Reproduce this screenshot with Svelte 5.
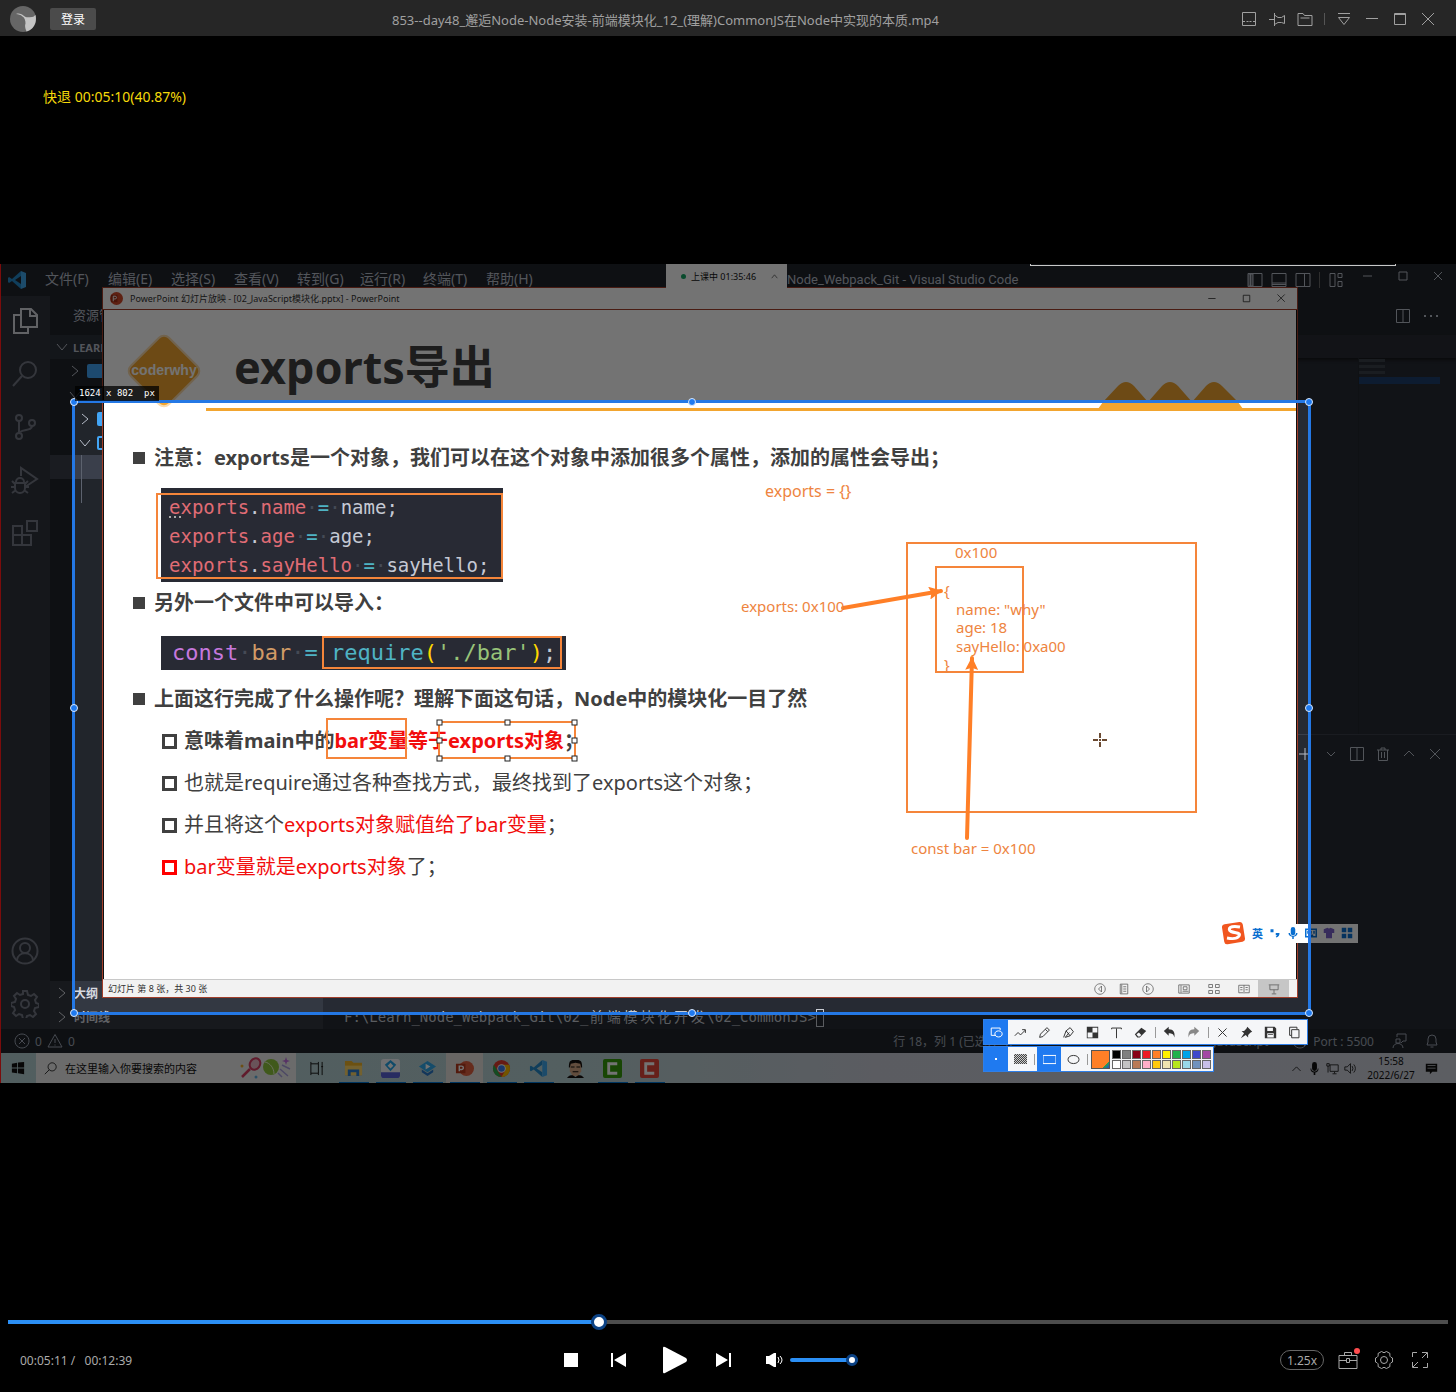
<script>
  const menus = ['文件(F)', '编辑(E)', '选择(S)', '查看(V)', '转到(G)', '运行(R)', '终端(T)', '帮助(H)'];
  const cjkCells = [...'前端模块化开发'];
  const palette = [
    '#000000', '#7f7f7f', '#880015', '#ed1c24', '#ff7f27', '#fff200', '#22b14c', '#00a2e8', '#3f48cc', '#a349a4',
    '#ffffff', '#c3c3c3', '#b97a57', '#ffaec9', '#ffc90e', '#efe4b0', '#b5e61d', '#99d9ea', '#7092be', '#c8bfe7'
  ];
  const handles = ['nw', 'n', 'ne', 'w', 'e', 'sw', 's', 'se'];
  const grips = [
    [439, 458], [507, 458], [574, 458], [439, 476], [574, 476], [439, 494], [507, 494], [574, 494]
  ];
  const notes = [
    [765, 233, 'exports = {}', 16],
    [955, 294, '0x100', 15],
    [741, 348, 'exports: 0x100', 15],
    [944, 332, '{', 15],
    [956, 351, 'name: "why"', 15],
    [956, 369, 'age: 18', 15],
    [956, 388, 'sayHello: 0xa00', 15],
    [944, 406, '}', 15],
    [911, 590, 'const bar = 0x100', 15]
  ];
  let position = $state(311);
  let volume = $state(100);
  const duration = 759;
  const seekFill = $derived((position / duration) * 100);
</script>

{#snippet line(d, label = '')}
  <svg class="ico" viewBox="0 0 16 16" role="img" aria-label={label}><path {d} /></svg>
{/snippet}

{#snippet solid(d, label = '')}
  <svg class="ico solid" viewBox="0 0 16 16" role="img" aria-label={label}><path {d} /></svg>
{/snippet}

{#snippet vscodeLogo()}
  <svg class="logo" viewBox="0 0 20 20" aria-hidden="true">
    <path fill="#2489ca" d="M14 1 5 9 2 7 1 8v4l1 1 3-2 9 8V14L8 10l6-4z" />
    <path fill="#3ea6ec" d="M14 1l5 2v14l-5 2z" />
  </svg>
{/snippet}

<div class="player">
  <header class="titlebar">
    <svg class="avatar" viewBox="0 0 26 26" aria-hidden="true">
      <circle cx="13" cy="13" r="13" fill="#666" />
      <path fill="#c4c4c4" d="M6 8c3-1 6 0 8 2 2 2 5 1 8 1 2 0 3-2 3.500-2 1 4 .5 9-3 13-2 2-4 3-6 3.500-1-3-2-5-1-8 0-3-1-6-3-7-2-2-4-2-6.500-2.500z" />
    </svg>
    <button class="login">登录</button>
    <h1>853--day48_邂逅Node-Node安装-前端模块化_12_(理解)CommonJS在Node中实现的本质.mp4</h1>
    <nav class="wintools">
      <button aria-label="迷你模式">{@render line('M1.500 1.500h13v13h-13zM2 10.500h2m1.500 0h2m1 0h2m1.500 0h2')}</button>
      <button aria-label="置顶">{@render line('M0 8.500h5M5.500 2v13M5.500 4l3.500 2.500h3.500l3-2v8l-3-1H9l-3.500 2')}</button>
      <button aria-label="打开文件">{@render line('M1 14.500v-12h5l1.500 2h7.500v10zM3.500 7h9')}</button>
      <i></i>
      <button aria-label="菜单">{@render line('M2 2.500h12M2.500 6.500h11l-5.500 7z')}</button>
      <button aria-label="最小化">{@render line('M2 7.500h12')}</button>
      <button aria-label="最大化">{@render line('M2.500 2.500h11v11h-11zM2.500 3.500h11')}</button>
      <button aria-label="关闭">{@render line('M2 2l12 12M14 2 2 14')}</button>
    </nav>
  </header>

  <main class="stage">
    <p class="osd">快退 00:05:10(40.87%)</p>

    <div class="desktop">
      <section class="vscode">
        <div class="menubar">
          {@render vscodeLogo()}
          <div class="menus">
            {#each menus as m}<span>{m}</span>{/each}
          </div>
          <span class="wname">Node_Webpack_Git - Visual Studio Code</span>
          <div class="layouts">
            {@render line('M1 1.500h14v13H1zM2 2h4v12H2zM3.500 2v12M5 2v12')}
            {@render line('M1 1.500h14v13H1zM1 11h14M1 12.500h14')}
            {@render line('M1 1.500h14v13H1zM9.500 2v12')}
            <i></i>
            {@render line('M2 1.500h5v13H2zM10 1.500h4v4h-4zM10 9.500h4v5h-4z')}
          </div>
          <div class="sysbtns">
            {@render line('M3 8h9')}
            {@render line('M4 4h8v8H4z')}
            {@render line('M4 4l8 8M12 4l-8 8')}
          </div>
        </div>

        <div class="work">
          <aside class="activity">
            <svg class="on" viewBox="0 0 28 28"><path d="M10 2h10l6 6v12H10zM19 2v7h7M10 8H3v18h14v-6" /></svg>
            <svg viewBox="0 0 28 28"><circle cx="17" cy="10" r="8" /><path d="M11 16 2 26" /></svg>
            <svg viewBox="0 0 28 28"><circle cx="8" cy="5" r="3" /><circle cx="8" cy="23" r="3" /><circle cx="21" cy="10" r="3" /><path d="M8 8v12M21 13c0 5-8 3-12 6" /></svg>
            <svg viewBox="0 0 28 28"><path d="M10 10V2l16 11-12 8M5 16a4 4 0 0 1 8 0M4 17h10v5a5 5 0 0 1-10 0zM1 15l3 3M17 15l-3 3M0 21h4M14 21h4M1 27l4-3M17 27l-4-3" /></svg>
            <svg viewBox="0 0 28 28"><path d="M2 7h9v9h9v10H2zM2 16h9v10M16 2h10v10H16z" /></svg>
            <span class="push"></span>
            <svg viewBox="0 0 28 28"><circle cx="14" cy="14" r="12.500" /><circle cx="14" cy="11" r="5" /><path d="M6 23c1-9 15-9 16 0" /></svg>
            <svg viewBox="0 0 28 28"><path d="M12 1h4l1 4 3 1 3-2 3 3-2 3 1 3 3 1v3l-4 1-1 3 2 3-3 3-3-2-3 1-1 3h-3l-1-4-3-1-3 2-3-3 2-3-1-3-3-1v-3l4-1 1-3-2-3 3-3 3 2 3-1z" /><circle cx="14" cy="14" r="4" /></svg>
          </aside>
          <aside class="sidebar">
            <div class="shead">资源管理器</div>
            <div class="row root">{@render line('M3 5l5 6 5-6')}<b>LEARN</b></div>
            <div class="row d1">{@render line('M5 3l6 5-6 5')}<span class="folder"></span></div>
            <div class="row d1">{@render line('M3 5l5 6 5-6')}<span class="folder"></span></div>
            <div class="row d2">{@render line('M5 3l6 5-6 5')}<span class="folder"></span></div>
            <div class="row d2">{@render line('M3 5l5 6 5-6')}<span class="folder open"></span></div>
            <div class="row sel"><span class="guide"></span></div>
            <div class="row"><span class="guide"></span></div>
            <span class="push"></span>
            <div class="row foot">{@render line('M5 3l6 5-6 5')}<b>大纲</b></div>
            <div class="row foot">{@render line('M5 3l6 5-6 5')}<b>时间线</b></div>
          </aside>
          <div class="editor">
            <div class="tabs">
              {@render line('M1.500 1.500h13v13h-13zM8 2v12')}
              {@render solid('M1 7h2v2H1zM7 7h2v2H7zM13 7h2v2h-2z')}
            </div>
            <div class="crumbs"></div>
            <div class="code"><div class="minimap"><i></i><i></i><i></i><b></b></div></div>
            <div class="panel">
              <div class="ptools">
                {@render line('M8 2v12M2 8h12')}
                {@render line('M4 6l4 4 4-4')}
                {@render line('M1.500 1.500h13v13h-13zM8 2v12')}
                {@render line('M2 4h12M6 4V2h4v2M3.500 4v10.500h9V4M6.500 6v6M9.500 6v6')}
                {@render line('M3 10l5-5 5 5')}
                {@render line('M3 3l10 10M13 3 3 13')}
              </div>
              <p class="prompt">F:\Learn_Node_Webpack_Git\02_{#each cjkCells as c}<span class="cell">{c}</span>{/each}\02_CommonJS&gt;<span class="caret"></span></p>
            </div>
          </div>
        </div>

        <div class="statusbar">
          {@render line('M8 1a7 7 0 1 0 .01 0zM5 5l6 6M11 5l-6 6')}<span>0</span>
          {@render line('M8 1.500 1 14h14zM8 6v4M8 11.500v1')}<span>0</span>
          <span class="pos">行 18，列 1 (已选择 4)</span>
          <span class="lang">JavaScript</span>
          {@render line('M8 1a7 7 0 1 0 .01 0zM3 3l10 10')}
          <span>Port : 5500</span>
          <span class="fb">{@render line('M5 6h4v4H5zM2 15c0-6 10-6 10 0M6 4V1h9v7h-3l-2 2')}</span>
          <span class="bell">{@render line('M3 12h10l-1-3V6a4 4 0 0 0-8 0v3zM6.500 14h3')}</span>
        </div>
      </section>

      <div class="taskbar">
        <span class="start">{@render solid('M1 3l6-1v5.500H1zM8 1.800 15 1v6.500H8zM1 8.500h6V14l-6-1zM8 8.500h7V15l-7-1z')}</span>
        <div class="search">
          {@render line('M10 1a5 5 0 1 0 .01 0zM6.500 9.500 1 15')}
          <span>在这里输入你要搜索的内容</span>
          <svg class="sport" viewBox="0 0 52 22" aria-hidden="true">
            <ellipse cx="15" cy="7" rx="5" ry="6" transform="rotate(35 15 7)" fill="#e9b9c6" stroke="#d43c62" stroke-width="2" />
            <path d="M10 12 2 20" stroke="#d43c62" stroke-width="2.500" />
            <circle cx="31" cy="10" r="8" fill="#8fc63d" /><path d="M25 5c5 1 9 6 9 12" stroke="#eaf6d0" fill="none" />
            <path d="M40 12l8 7M42 8l8 4M38 16l4 4" stroke="#a9a0dd" stroke-width="1.500" />
            <path d="M46 0l1 3 3 1-3 1-1 3-1-3-3-1 3-1z" fill="#c070e0" /><circle cx="2" cy="9" r="1.500" fill="#f0b030" /><circle cx="16" cy="20" r="1.500" fill="#60b0e0" />
          </svg>
        </div>
        <span class="app plain">{@render line('M2 3v-2M10 3v-2M2 15v-2M10 15v-2M2 3h8v10H2zM14 1v14M13 6h2')}</span>
        <span class="app"><svg viewBox="0 0 20 20"><path fill="#f0b429" d="M1 2h7l2 2h9v13H1z" /><path fill="#ffd768" d="M1 7h18v10H1z" /><path fill="#2f7fd0" d="M4 18v-7h12v7h-3v-4H7v4z" /></svg></span>
        <span class="app"><svg viewBox="0 0 20 20"><rect width="20" height="20" rx="3" fill="#f3f6fb" /><path fill="#25a5e8" d="M4 6l6-5 6 5-6 7z" /><path fill="#fff" d="M10 4l3 3-3 3-3-3z" /><path fill="#5a62d8" d="M0 14h20v3a3 3 0 0 1-3 3H3a3 3 0 0 1-3-3z" /></svg></span>
        <span class="app"><svg viewBox="0 0 20 20"><path fill="#2fa8ea" d="M1 8l9-6 9 6-9 6z" /><path fill="#2b78c8" d="M4 11l6 4 6-4v3l-6 4-6-4z" /><path fill="#fff" d="M8 5l5 3-5 3z" /></svg></span>
        <span class="app lit"><svg viewBox="0 0 20 20"><circle cx="12" cy="10" r="8" fill="#e2603f" /><path fill="#b83b1d" d="M1 5h10v10H1z" /><path d="M4.500 13V7.500H7a1.500 1.500 0 0 1 0 3.500H5" fill="none" stroke="#fff" stroke-width="1.500" /></svg></span>
        <span class="app"><svg viewBox="0 0 20 20"><circle cx="10" cy="10" r="9" fill="#e33b2e" /><path fill="#2da94f" d="M2 6l6 10 2 3a9 9 0 0 1-8-13z" /><path fill="#fdbd00" d="M10 6h8a9 9 0 0 1-8 13l4-7z" /><circle cx="10" cy="10" r="4.500" fill="#fff" /><circle cx="10" cy="10" r="3.500" fill="#3b7ded" /></svg></span>
        <span class="app">{@render vscodeLogo()}</span>
        <span class="app plain"><svg viewBox="0 0 20 20"><path fill="#d9ab88" d="M4 4h12v9l-3 5H7l-3-5z" /><path fill="#15100e" d="M3 9c0-8 2-8 7-8s7 0 7 8h-1l-1-4-5-1-5 1-1 4zM5 8h4v1H5zM11 8h4v1h-4zM7 13h6v1H7zM1 20c2-3 4-3 6-3l3 2 3-2c2 0 4 0 6 3z" /></svg></span>
        <span class="app"><svg viewBox="0 0 20 20"><rect width="20" height="20" rx="2" fill="#379c0c" /><path d="M15 5H6v10h9" fill="none" stroke="#fff" stroke-width="3" /></svg></span>
        <span class="app"><svg viewBox="0 0 20 20"><rect width="20" height="20" rx="2" fill="#e2483b" /><path d="M15 5H6v10h9" fill="none" stroke="#fff" stroke-width="3" /></svg></span>
        <div class="tray">
          {@render line('M3 11l5-5 5 5')}
          {@render solid('M5 3a3 3 0 0 1 6 0v5a3 3 0 0 1-6 0zM3 8h1c0 5 8 5 8 0h1c0 3-2 5-4 5v3H7v-3c-2 0-4-2-4-5z')}
          {@render line('M5 3.500h10v8H5zM8 14.500h5M10.500 12v2M1 2h3v3H1zM2.500 5v8')}
          {@render line('M1 6h3l4-4v12l-4-4H1zM10 5q2 3 0 6M12 3q4 5 0 10')}
          <time>15:58<br />2022/6/27</time>
          {@render solid('M1 2h14v10h-6l-3 3v-3H1zM3 4v1h10V4zM3 7v1h10V7z')}
        </div>
      </div>

      <section class="ppt">
        <div class="ptitle">
          <svg viewBox="0 0 14 14" aria-hidden="true"><circle cx="7" cy="7" r="7" fill="#d0492a" /><path fill="#a52f15" d="M1 3h7v8H1z" /><path d="M3.500 10V4.500h2a1.500 1.500 0 0 1 0 3h-2" fill="none" stroke="#fff" /></svg>
          <span>PowerPoint 幻灯片放映 - [02_JavaScript模块化.pptx] - PowerPoint</span>
          <div class="pbtns">
            {@render line('M4 8h9')}
            {@render line('M4 4h8v8H4z')}
            {@render line('M3 3l9 9M12 3l-9 9')}
          </div>
        </div>
        <article class="slide">
          <header>
            <div class="brand">
              <svg viewBox="0 0 80 80" aria-hidden="true"><rect x="13" y="14" width="54" height="54" rx="7" transform="rotate(45 40 41)" fill="#f2a52f" stroke="#fbdcae" stroke-width="2" /></svg>
              <span>coderwhy</span>
            </div>
            <h2>exports导出</h2>
            <svg class="hills" viewBox="0 0 146 30" aria-hidden="true"><path fill="#f2a52f" d="M0 29 5 22 20 6q8-8 16 0l14 16 14-16q8-8 16 0l14 16 14-16q8-8 16 0l16 16 5 7z" /></svg>
          </header>
          <div class="content">
            <p class="h">注意：exports是一个对象，我们可以在这个对象中添加很多个属性，添加的属性会导出；</p>
            <pre class="snip one"><u class="hint">exports</u>.<u>name</u><s>·</s><em>=</em><s>·</s>name;
<u>exports</u>.<u>age</u><s>·</s><em>=</em><s>·</s>age;
<u>exports</u>.<u>sayHello</u><s>·</s><em>=</em><s>·</s>sayHello;</pre>
            <p class="h">另外一个文件中可以导入：</p>
            <pre class="snip two"><span class="kw">const</span><s>·</s><span class="id">bar</span><s>·</s><em>=</em> <em>require</em><span class="br">(</span><span class="st">'./bar'</span><span class="br">)</span>;</pre>
            <p class="h">上面这行完成了什么操作呢？理解下面这句话，Node中的模块化一目了然</p>
            <ul>
              <li class="bold">意味着main中的<mark>bar变量等于exports对象</mark>；</li>
              <li>也就是require通过各种查找方式，最终找到了exports这个对象；</li>
              <li>并且将这个<mark>exports对象赋值给了bar变量</mark>；</li>
              <li class="red"><mark>bar变量就是exports对象</mark>了；</li>
            </ul>
          </div>
        </article>
        <footer>
          <span>幻灯片 第 8 张，共 30 张</span>
          <div class="views">
            {@render line('M8 1a7 7 0 1 0 .01 0zM10 4v8L6 8z')}
            {@render line('M3 1.500h10v13H3zM5 2v12M7 5h4M7 8h4M7 11h4')}
            {@render line('M8 1a7 7 0 1 0 .01 0zM6 4v8l4-4z')}
            {@render line('M1 2.500h14v11H1zM4 3v10M7 5h5v4H7zM6 11h8')}
            {@render line('M1 2h5v4H1zM10 2h5v4h-5zM1 10h5v4H1zM10 10h5v4h-5z')}
            {@render line('M8 3v11M8 3H1v10h6M8 3h7v10H9M3 6h3M3 9h3M10 6h3M10 9h3')}
            <span class="active">{@render line('M1 2.500h14M2.500 3v6h11V3M8 9v5M5 14.500h6')}</span>
          </div>
        </footer>
      </section>

      <svg class="drawings" aria-label="标注">
        <defs>
          <marker id="tip" viewBox="0 0 12 12" refX="11" refY="6" markerWidth="15" markerHeight="13" markerUnits="userSpaceOnUse" orient="auto">
            <path d="M0 0l12 6-12 6 2-6z" fill="#ff7f27" />
          </marker>
        </defs>
        <g class="box">
          <rect x="157" y="230" width="345" height="84" />
          <rect x="323" y="373" width="238" height="31" />
          <rect x="327" y="455" width="79" height="39" />
          <rect x="439" y="458" width="136" height="36" />
          <rect x="907" y="279" width="289" height="269" />
          <rect x="936" y="303" width="87" height="105" />
        </g>
        <path class="arrow" d="M843 344l98-17" marker-end="url(#tip)" />
        <path class="arrow" d="M967 574l5-180" marker-end="url(#tip)" />
        {#each grips as [x, y]}<rect class="grip" x={x - 2} y={y - 2} width="5" height="5" />{/each}
        {#each notes as [x, y, text, size]}<text {x} {y} font-size={size}>{text}</text>{/each}
        <path class="cross" d="M1093 476h5M1102 476h5M1100 469v5M1100 478v5M1099 476h2" />
      </svg>

      <div class="ime">
        <svg class="sogou" viewBox="0 0 24 24" aria-hidden="true"><rect x="1" y="2" width="21" height="20" rx="3" transform="rotate(-9 12 12)" fill="#f1561f" /><path d="M18 6C8 4 5 8 9 10.500c5 2 10 1 8 4.500-2 3-7 3-12 2" fill="none" stroke="#fff" stroke-width="3" /></svg>
        <b>英</b>
        {@render solid('M2 3h4v4H2zM9 8h5c0 3-1 5-4 6l-1-1 2-2H9z')}
        {@render solid('M5 3a3 3 0 0 1 6 0v5a3 3 0 0 1-6 0zM2 8h2c0 5 8 5 8 0h2c0 3-2 4.500-5 5v3H7v-3c-3-.5-5-2-5-5z')}
        <span class="keys">{@render line('M1 3h14v10H1zM3 6h2M7 6h2M11 6h2M3 8h2M7 8h2M11 8h2M5 11h6')}</span>
        <span class="shirt">{@render solid('M1 3l5-2q2 2 4 0l5 2v5h-3v7H4V8H1z')}</span>
        {@render solid('M1 1h6v6H1zM9 1h6v6H9zM1 9h6v6H1zM9 9h6v6H9z')}
      </div>

      <div class="class-chip"><i></i><span>上课中 01:35:46</span>{@render line('M3 11l5-6 5 6')}</div>

      <div class="selection">
        {#each handles as h}<i class={h}></i>{/each}
        <span class="dims">1624 x 802&nbsp; px</span>
      </div>
      <span class="edge"></span>
      <span class="topline"></span>

      <div class="shot">
        <div class="bar main">
          <button class="on" aria-label="形状">{@render line('M7 11.500H1.500v-9h11V5M10.500 6c6 0 6 7.500 0 7.500s-6-7.500 0-7.500z')}</button>
          <button aria-label="折线">{@render line('M1 12l4-4 3 3 6-6M10 4.500h4v4')}</button>
          <button aria-label="铅笔">{@render line('M2 14l1-4 8-8 3 3-8 8zM9 4l3 3')}</button>
          <button aria-label="荧光笔">{@render line('M2 14l3-8 5-4 4 5-4 5-6 2 5-6M5 6l5 6')}</button>
          <button aria-label="马赛克">{@render solid('M1 1h14v14H1zM8 2v6h6V2zM2 8v6h6V8z')}</button>
          <button aria-label="文字">{@render line('M2 4V2.500h12V4M8 3v12')}</button>
          <button aria-label="橡皮">{@render solid('M1 10l8-8 6 4-8 8H4zM3 10l2 3h2l2-2-3-3z')}</button>
          <i></i>
          <button aria-label="撤销">{@render solid('M1 6l6-5v3c6 0 8 4 7 10-1-4-3-5-7-5v3z')}</button>
          <button class="dimmed" aria-label="重做">{@render solid('M15 6 9 1v3C3 4 1 8 2 14c1-4 3-5 7-5v3z')}</button>
          <i></i>
          <button aria-label="取消">{@render line('M3 3l10 10M13 3 3 13')}</button>
          <button aria-label="钉住">{@render solid('M9 1l6 6-2 1-3 3v3l-3-3-6 4 4-6-3-3h3l3-3z')}</button>
          <button aria-label="保存">{@render solid('M1 1h12l2 2v12H1zM4 2v4h7V2zM4 9v5h8V9zM5 10h6v1H5z')}</button>
          <button aria-label="复制">{@render line('M4.500 4.500h9v10h-9zM11 4V1.500H2v10h2')}</button>
        </div>
        <div class="bar sub">
          <button class="on" aria-label="线宽"><span class="dot"></span></button>
          <button aria-label="填充"><span class="mesh"></span></button>
          <i></i>
          <button class="on" aria-label="矩形">{@render line('M0 3h16v10H0z')}</button>
          <button aria-label="椭圆">{@render line('M8 3c9 0 9 10 0 10S-1 3 8 3z')}</button>
          <i></i>
          <button class="current" aria-label="当前颜色"></button>
          <div class="palette">
            {#each palette as c}<button style:background={c} aria-label={c}></button>{/each}
          </div>
        </div>
      </div>
    </div>
  </main>

  <footer class="controls">
    <input class="seek" type="range" min="0" max={duration} bind:value={position} style:--fill="{seekFill}%" aria-label="播放进度" />
    <div class="buttons">
      <div class="time">00:05:11 /&nbsp;&nbsp; 00:12:39</div>
      <div class="transport">
        <button aria-label="停止">{@render solid('M1 1h14v14H1z')}</button>
        <button aria-label="上一个">{@render solid('M0 1h2v14H0zM15 1v14L3 8z')}</button>
        <button class="play" aria-label="播放">
          <svg viewBox="0 0 26 28"><path fill="#fff" d="M1 2q0-2 2-1l21 11q2 2 0 4L3 27q-2 1-2-1z" /></svg>
        </button>
        <button aria-label="下一个">{@render solid('M14 1h2v14h-2zM1 1v14l12-7z')}</button>
        <div class="vol">
          <button aria-label="音量">
            <svg viewBox="0 0 18 16"><path fill="#fff" d="M0 4h3l5-3h2v14H8l-5-3H0z" /><path d="M12 5q2 3 0 6M14 4q4 4 0 8" fill="none" stroke="#fff" /></svg>
          </button>
          <input class="volume" type="range" min="0" max="100" bind:value={volume} aria-label="音量大小" />
        </div>
      </div>
      <div class="extras">
        <button class="speed">1.25x</button>
        <button class="kit" aria-label="工具箱">
          <svg viewBox="0 0 20 20"><path d="M1 5.500h18v13H1zM6.500 5V2.500h7V5M1 10.500h7M12 10.500h7M8.500 8.500h3v4h-3z" /></svg>
          <span class="badge"></span>
        </button>
        <button aria-label="设置">
          <svg viewBox="0 0 20 20"><path d="M7.500 1.500Q10 4 12.500 1.500L16 3.500Q15 7 18.500 8v4Q15 13 16 16.500l-3.500 2Q10 16 7.500 18.500L4 16.500Q5 13 1.500 12V8Q5 7 4 3.500z" /><circle cx="10" cy="10" r="3.500" /></svg>
        </button>
        <button aria-label="全屏">
          <svg viewBox="0 0 20 20"><path d="M2.500 7V2.500H7M12 2.500h5.500V8M17 3l-5 5M17.500 13v4.500H13M8 17.500H2.500V12M3 17l5-5" /></svg>
        </button>
      </div>
    </div>
  </footer>
</div>

<style>
  :global(body) { background: #000; }
  .player, .player * { box-sizing: border-box; }
  .player {
    min-height: 100vh; display: flex; flex-direction: column; background: #000; color: #a9a9a9;
    font-family: "Noto Sans", "Noto Sans CJK SC", sans-serif; font-size: 12px; overflow: hidden;
  }
  h1, h2, p, ul, pre { margin: 0; padding: 0; }
  button { border: 0; padding: 0; background: none; color: inherit; font: inherit; display: flex; align-items: center; justify-content: center; }
  .ico { width: 16px; height: 16px; flex: none; fill: none; stroke: currentColor; stroke-width: 1; display: block; }
  .solid { fill: currentColor; stroke: none; fill-rule: evenodd; }
  .logo { width: 20px; height: 20px; flex: none; display: block; }
  .push { flex: 1; }

  .titlebar { height: 36px; flex: none; display: flex; align-items: center; background: #262626; padding: 4px 20px 0 10px; }
  .titlebar > * { margin-bottom: 2px; }
  .avatar { width: 26px; height: 26px; }
  .login { width: 46px; height: 22px; margin-left: 14px; background: #4b4b4b; color: #fff; border-radius: 2px; font-size: 12px; }
  h1 { flex: 1; padding: 2px 6px 0 0; text-align: center; font-size: 13px; line-height: 20px; font-weight: 400; color: #a0a0a0; white-space: nowrap; }
  .wintools { display: flex; align-items: center; gap: 12px; color: #a0a0a0; }
  .wintools i { width: 1px; height: 12px; background: #555; margin: 0 -1px; }

  .stage { flex: 1; position: relative; display: flex; align-items: center; }
  .osd { position: absolute; left: 43px; top: 50px; font-size: 14px; line-height: 22px; color: #f5d90a; }
  .desktop { position: relative; width: 100%; aspect-ratio: 16 / 9; overflow: hidden; display: flex; flex-direction: column; background: #262a33; }

  .vscode { flex: 1; min-height: 0; display: flex; flex-direction: column; color: #b6bcc8; }
  .menubar { height: 32px; flex: none; background: #21252b; display: flex; align-items: center; padding: 0 10px 0 7px; white-space: nowrap; }
  .menus { display: flex; margin-left: 18px; gap: 9px; width: 742px; font-size: 14px; line-height: 20px; padding-bottom: 2px; }
  .menus span { min-width: 54px; }
  .wname { font: 14px/20px Roboto, sans-serif; font-size: 13px; flex: 1; }
  .layouts { display: flex; gap: 8px; align-items: center; margin-right: 16px; }
  .layouts i { width: 1px; height: 16px; background: #666; }
  .sysbtns { display: flex; gap: 19px; padding-bottom: 8px; }
  .work { flex: 1; min-height: 0; display: flex; }
  .activity { width: 50px; background: #2f333d; padding: 11px 0; display: flex; flex-direction: column; align-items: center; gap: 25px; }
  .activity svg { width: 28px; height: 28px; flex: none; fill: none; stroke: #747985; stroke-width: 2; }
  .activity .on { stroke: #d7dae0; }
  .sidebar { width: 273px; background: #21252b; display: flex; flex-direction: column; font-size: 12px; }
  .shead { height: 39px; line-height: 39px; padding-left: 23px; font-size: 13px; }
  .row { height: 24px; display: flex; align-items: center; padding-left: 4px; gap: 4px; }
  .root { background: #2c313a; }
  .root b { font-size: 11px; margin-left: -1px; }
  .d1 { padding-left: 17px; }
  .d2 { padding-left: 27px; }
  .folder { width: 20px; height: 14px; border-radius: 2px; background: #42a5f5; }
  .open { background: none; border: 2px solid #42a5f5; }
  .sel { background: #3a3f4b; }
  .guide { width: 1px; height: 24px; margin-left: 27px; background: #5c626e; }
  .foot { background: #333842; color: #d7dae0; height: 24px; }
  .editor { flex: 1; display: flex; flex-direction: column; background: #262a33; }
  .tabs { height: 39px; background: #21252b; display: flex; justify-content: flex-end; align-items: center; gap: 12px; padding-right: 17px; }
  .crumbs { height: 23px; background: #282c34; box-shadow: 0 2px 3px #15171a; }
  .code { flex: 1; display: flex; justify-content: flex-end; border-bottom: 1px solid #3a3f4b; }
  .minimap { width: 98px; border-left: 1px solid #23272e; padding: 1px 16px 0 0; display: flex; flex-direction: column; gap: 3px; }
  .minimap i { width: 26px; height: 3px; background: #3b404a; }
  .minimap b { height: 7px; background: #1e3f6e; }
  .panel { height: 294px; display: flex; flex-direction: column; justify-content: space-between; }
  .ptools { height: 38px; display: flex; align-items: center; justify-content: flex-end; gap: 10px; padding-right: 13px; }
  .prompt { font: 14px/24px "DejaVu Sans Mono", "Noto Sans CJK SC", monospace; padding-left: 21px; color: #c8ccd4; white-space: nowrap; }
  .cell { display: inline-block; width: 2ch; text-align: center; }
  .caret { display: inline-block; width: 8px; height: 18px; border: 1px solid #c8ccd4; vertical-align: middle; }
  .statusbar { height: 24px; flex: none; background: #21252b; display: flex; align-items: center; gap: 5px; padding: 0 16px 0 14px; font-size: 12px; color: #9da5b4; }
  .pos { margin-left: auto; flex: none; width: 315px; }
  .lang { width: 74px; }
  .fb { margin-left: 12px; }
  .bell { margin-left: 12px; }

  .taskbar { height: 30px; flex: none; display: flex; align-items: center; background: linear-gradient(90deg, #b4d0d3, #b9d2d4 40%, #c9cdd8 60%, #cdd0da); color: #111; }
  .start { width: 36px; display: flex; justify-content: center; }
  .start .ico { width: 14px; height: 14px; }
  .search { width: 260px; height: 30px; margin-right: 2px; background: #eee; display: flex; align-items: center; gap: 8px; padding: 0 4px 0 8px; font-size: 11px; }
  .search .ico { width: 13px; height: 13px; }
  .search span { flex: 1; }
  .sport { width: 52px; height: 22px; }
  .app { width: 37px; height: 30px; display: flex; align-items: center; justify-content: center; background: linear-gradient(#0078d7, #0078d7) center bottom / 30px 1px no-repeat; }
  .app svg { width: 19px; height: 19px; }
  .app.plain { background: none; }
  .app .ico { width: 15px; height: 15px; }
  .app.lit { background-color: #e6e2de; }
  .tray { margin-left: auto; display: flex; align-items: center; gap: 5px; padding-right: 18px; }
  .tray .ico { width: 13px; height: 13px; }
  .tray time { width: 58px; text-align: center; font-size: 10px; line-height: 14px; }

  .ppt { position: absolute; left: 102px; top: 23px; width: 1196px; height: 711px; border: 1px solid #a23f2b; background: #fff; display: flex; flex-direction: column; color: #333; }
  .ptitle { height: 22px; flex: none; border-bottom: 1px solid #a23f2b; display: flex; align-items: center; padding: 0 9px 0 7px; gap: 7px; font-size: 9px; }
  .ptitle > svg { width: 13px; height: 13px; }
  .ptitle span { flex: 1; white-space: nowrap; }
  .pbtns { display: flex; gap: 22px; }
  .pbtns .ico { width: 13px; height: 13px; }
  .slide { flex: 1; min-height: 0; border: solid #111; border-width: 0 1px; }
  .slide header { height: 101px; display: flex; align-items: flex-start; position: relative; padding: 20px 0 0 20px; background: linear-gradient(#f2a52f, #f2a52f) 102px bottom / 100% 3px no-repeat; }
  .brand { width: 80px; height: 80px; display: grid; place-items: center; color: #fff; }
  .brand > * { grid-area: 1 / 1; }
  .brand svg { width: 80px; height: 80px; }
  .brand span { font: bold 14px "Liberation Sans", sans-serif; }
  h2 { margin-left: 30px; font-size: 45px; line-height: 74px; font-weight: 700; color: #404040; }
  .hills { width: 146px; height: 30px; margin: 50px 52px 0 auto; }
  .content { padding: 26px 29px; font-size: 20px; line-height: 42px; color: #404040; white-space: nowrap; }
  .content .h { font-weight: 700; display: flex; align-items: center; gap: 9px; }
  .h::before { content: ""; width: 12px; height: 12px; background: #404040; }
  .snip { width: max-content; margin-left: 28px; background: #282a34; color: #c5c9d4; font-family: "DejaVu Sans Mono", monospace; }
  .one { margin-top: 9px; padding: 5px 14px 2px 8px; font-size: 19px; line-height: 29px; }
  .two { margin-top: 12px; margin-bottom: 8px; padding: 0 10px 0 11px; font-size: 22px; line-height: 34px; }
  .snip u { text-decoration: none; color: #e06c75; }
  .snip .hint { background: radial-gradient(circle, #c5c9d4 1px, transparent 1px) 0 100% / 4px 3px repeat-x; background-size: 4px 3px; }
  .snip .hint { background: linear-gradient(90deg, #aaa 2px, transparent 2px 5px, #aaa 5px 7px, transparent 7px 10px, #aaa 10px 12px, transparent 12px) left bottom / 100% 2px no-repeat; }
  .snip s { text-decoration: none; color: #454a56; }
  .snip em { font-style: normal; color: #4fb3c4; }
  .kw { color: #c678dd; }
  .id { color: #d19a66; }
  .br { color: #ffd700; }
  .st { color: #98c379; }
  ul { list-style: none; }
  li { display: flex; align-items: center; padding-left: 29px; }
  li::before { content: ""; width: 9px; height: 9px; border: 3px solid #404040; margin-right: 7px; }
  li.red::before { border-color: #f00; }
  .bold { font-weight: 700; }
  mark { background: none; color: #f20d0d; }
  .ppt footer { height: 18px; flex: none; background: #f2f2f2; border-top: 1px solid #c8c8c8; display: flex; align-items: center; justify-content: space-between; padding: 0 8px 0 5px; font-size: 9px; }
  .views { display: flex; align-items: center; gap: 12px; color: #555; }
  .views .ico { width: 12px; height: 12px; }
  .views .ico:nth-child(n + 4) { margin-left: 6px; }
  .views .ico:nth-child(4) { margin-left: 12px; }
  .views .active { background: #c6c6c6; width: 31px; height: 17px; margin-left: -4px; display: grid; place-items: center; }
  .views .active .ico { margin: 0; }

  .drawings { position: absolute; inset: 0; width: 100%; height: 100%; }
  .box rect { fill: none; stroke: #f5853a; stroke-width: 2; }
  .arrow { stroke: #ff7f27; stroke-width: 4; stroke-linecap: round; }
  .grip { fill: #fff; stroke: #222; }
  .drawings text { fill: #ee8440; font-family: "Noto Sans", sans-serif; }
  .cross { stroke: #6b4a32; stroke-width: 2; }

  .ime { position: absolute; left: 1222px; top: 657px; width: 136px; height: 24px; display: flex; align-items: center; gap: 6px; padding-right: 4px; color: #0a6fd0; background: linear-gradient(#fff, #fff) 14px 3px / 122px 19px no-repeat; }
  .ime .ico { width: 12px; height: 12px; }
  .ime b { font-size: 11px; }
  .sogou { width: 24px; height: 24px; flex: none; }
  .shirt { color: #7a63c9; }
  .keys .ico { stroke-width: 2; }
  .class-chip { position: absolute; left: 666px; top: 0; width: 121px; height: 25px; background: #fff; color: #111; display: flex; align-items: center; gap: 5px; padding: 0 8px 0 15px; font-size: 9px; white-space: nowrap; }
  .class-chip i { width: 5px; height: 5px; border-radius: 50%; background: #16a765; }
  .class-chip span { flex: 1; }
  .class-chip .ico { width: 9px; height: 9px; }

  .selection { position: absolute; left: 72px; top: 136px; width: 1239px; height: 615px; border: 3px solid #2478e5; box-shadow: 0 0 0 2000px rgba(0, 0, 0, .55); }
  .selection i { position: absolute; width: 8px; height: 8px; border-radius: 50%; background: #1f7af0; border: 1px solid #dbe9fb; transform: translate(-50%, -50%); left: 50%; top: 50%; }
  .selection .nw, .selection .w, .selection .sw { left: -1px; }
  .selection .ne, .selection .e, .selection .se { left: calc(100% + 1px); }
  .selection .nw, .selection .n, .selection .ne { top: -1px; }
  .selection .sw, .selection .s, .selection .se { top: calc(100% + 1px); }
  .dims { position: absolute; left: 0; bottom: calc(100% + 2px); height: 15px; padding: 0 4px; background: rgba(0, 0, 0, .75); color: #fff; font: 9px/15px "DejaVu Sans Mono", monospace; white-space: nowrap; }
  .edge { position: absolute; left: 0; top: 0; bottom: 0; width: 1px; background: #7a0c0c; }
  .topline { position: absolute; left: 1030px; top: 0; width: 366px; height: 2px; border: 1px solid #c8c8c8; border-top: 0; }

  .shot { position: absolute; left: 983px; top: 755px; color: #333; }
  .bar { display: flex; align-items: center; background: #f5f6f8; border: 1px solid #2f7fe8; }
  .bar button { height: 24px; flex: 1; }
  .bar .ico { width: 13px; height: 13px; stroke-width: 1.2; }
  .bar .solid { stroke-width: 0; }
  .bar i { width: 1px; height: 11px; background: #999; margin: 0 2px; }
  .bar .on { background: #1f7af0; color: #fff; }
  .bar .dimmed { color: #888; }
  .main { width: 325px; }
  .sub { width: max-content; margin-top: 1px; padding-right: 2px; }
  .sub button { flex: none; width: 24px; }
  .dot { width: 2px; height: 2px; background: #fff; }
  .mesh { width: 13px; height: 10px; background: repeating-conic-gradient(#444 0 25%, #ccc 0 50%) 0 0 / 2px 2px; }
  .sub button.current { width: 19px; height: 19px; border: 1px solid #555; background: linear-gradient(135deg, #ff7f27 80%, #27a844 80%, #2746d8); margin: 0 2px 0 1px; }
  .palette { display: grid; grid-template-columns: repeat(10, 9px); gap: 1px; }
  .palette button { width: 9px; height: 9px; border: 1px solid #666; }

  .controls { height: 81px; flex: none; }
  input[type="range"] { appearance: none; background: none; margin: 0; display: block; }
  input.seek { width: calc(100% - 16px); height: 22px; margin: 0 8px; }
  .seek::-webkit-slider-runnable-track { height: 4px; background: linear-gradient(90deg, #2b8ff5 var(--fill), #4d4d4d var(--fill)); }
  .seek::-webkit-slider-thumb { appearance: none; width: 16px; height: 16px; margin-top: -6px; border-radius: 50%; background: #fff; border: 3px solid #0b4285; }
  .volume { width: 68px; height: 16px; }
  .volume::-webkit-slider-runnable-track { height: 4px; border-radius: 2px; background: #2b8ff5; }
  .volume::-webkit-slider-thumb { appearance: none; width: 12px; height: 12px; margin-top: -4px; border-radius: 50%; background: #fff; border: 3px solid #0b4285; }
  .buttons { height: 54px; display: grid; grid-template-columns: 1fr auto 1fr; align-items: center; padding: 0 26px 0 20px; }
  .time { font-size: 12px; color: #aaa; }
  .transport { display: flex; align-items: center; color: #fff; padding-right: 29px; }
  .transport > button { width: 16px; margin-right: 32px; }
  .transport > .play { width: 26px; margin: 0 27px 0 3px; }
  .play svg { width: 26px; height: 28px; flex: none; }
  .vol { display: flex; align-items: center; gap: 6px; margin-left: 3px; }
  .vol button svg { width: 18px; height: 16px; }
  .extras { display: flex; justify-content: flex-end; align-items: center; gap: 16px; color: #a8a8a8; }
  .extras svg { width: 20px; height: 20px; fill: none; stroke: currentColor; display: block; }
  .speed { width: 44px; height: 20px; border: 1px solid #666; border-radius: 10px; font-size: 12px; margin-right: -2px; }
  .kit { position: relative; }
  .badge { position: absolute; right: -2px; top: -2px; width: 6px; height: 6px; border-radius: 50%; background: #ff4d4f; }
</style>
